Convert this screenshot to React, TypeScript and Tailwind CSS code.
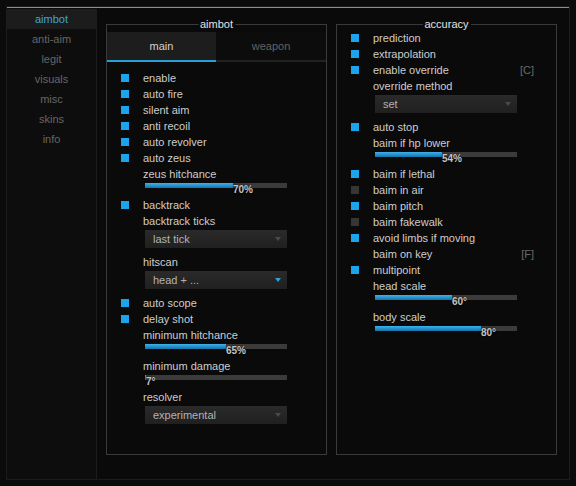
import React from "react";

type Item =
  | { kind: "check"; label: string; on?: boolean; bind?: string }
  | { kind: "label"; label: string }
  | { kind: "slider"; fill: number; text: string }
  | { kind: "select"; value: string; active?: boolean };

const tabs = ["aimbot", "anti-aim", "legit", "visuals", "misc", "skins", "info"];

const aimbotItems: Item[] = [
  { kind: "check", label: "enable", on: true },
  { kind: "check", label: "auto fire", on: true },
  { kind: "check", label: "silent aim", on: true },
  { kind: "check", label: "anti recoil", on: true },
  { kind: "check", label: "auto revolver", on: true },
  { kind: "check", label: "auto zeus", on: true },
  { kind: "label", label: "zeus hitchance" },
  { kind: "slider", fill: 88, text: "70%" },
  { kind: "check", label: "backtrack", on: true },
  { kind: "label", label: "backtrack ticks" },
  { kind: "select", value: "last tick" },
  { kind: "label", label: "hitscan" },
  { kind: "select", value: "head + ...", active: true },
  { kind: "check", label: "auto scope", on: true },
  { kind: "check", label: "delay shot", on: true },
  { kind: "label", label: "minimum hitchance" },
  { kind: "slider", fill: 81, text: "65%" },
  { kind: "label", label: "minimum damage" },
  { kind: "slider", fill: 1, text: "7°" },
  { kind: "label", label: "resolver" },
  { kind: "select", value: "experimental" },
];

const accuracyItems: Item[] = [
  { kind: "check", label: "prediction", on: true },
  { kind: "check", label: "extrapolation", on: true },
  { kind: "check", label: "enable override", on: true, bind: "[C]" },
  { kind: "label", label: "override method" },
  { kind: "select", value: "set" },
  { kind: "check", label: "auto stop", on: true },
  { kind: "label", label: "baim if hp lower" },
  { kind: "slider", fill: 67, text: "54%" },
  { kind: "check", label: "baim if lethal", on: true },
  { kind: "check", label: "baim in air" },
  { kind: "check", label: "baim pitch", on: true },
  { kind: "check", label: "baim fakewalk" },
  { kind: "check", label: "avoid limbs if moving", on: true },
  { kind: "label", label: "baim on key" },
  { kind: "check", label: "multipoint", on: true },
  { kind: "label", label: "head scale" },
  { kind: "slider", fill: 77, text: "60°" },
  { kind: "label", label: "body scale" },
  { kind: "slider", fill: 106, text: "80°" },
];

function Row({ item }: { item: Item }) {
  if (item.kind === "check" || item.kind === "label") {
    const bind =
      item.kind === "check" ? item.bind : item.label === "baim on key" ? "[F]" : undefined;
    return (
      <div className="flex h-[16px] items-center pr-[22px]">
        <div className="flex w-[22px] items-center">
          {item.kind === "check" && (
            <div className={`h-[8px] w-[8px] ${item.on ? "bg-[#1ba3ec]" : "bg-[#363636]"}`} />
          )}
        </div>
        <span className="text-[#cdcdcd]">{item.label}</span>
        {bind && <span className="ml-auto text-[#6a6a6a]">{bind}</span>}
      </div>
    );
  }
  if (item.kind === "slider") {
    return (
      <div className="h-[15px] pl-[24px] pt-[1px]">
        <div className="relative h-[5px] w-[142px] bg-[#3b3b3b]">
          <div
            className="h-full bg-gradient-to-b from-[#3cb2ee] to-[#1473a9]"
            style={{ width: item.fill }}
          />
          <span
            className="absolute top-[2px] text-[10px] font-bold leading-[10px] text-[#c4c4c4] [text-shadow:0_0_2px_#000]"
            style={{ left: item.fill }}
          >
            {item.text}
          </span>
        </div>
      </div>
    );
  }
  return (
    <div className="pb-[6px] pl-[24px] pt-[1px]">
      <div className="flex h-[18px] w-[142px] items-center bg-gradient-to-b from-[#2a2a2a] to-[#202020] pl-[8px] pr-[6px] text-[#b3b3b3]">
        <span>{item.value}</span>
        <svg className="ml-auto" width="6" height="4" viewBox="0 0 6 4">
          <path d="M0 0h6L3 4z" fill={item.active ? "#2f9fd8" : "#4a4a4a"} />
        </svg>
      </div>
    </div>
  );
}

function Group({ title, children }: { title: string; children: React.ReactNode }) {
  return (
    <div className="relative h-[431px] w-[221px] border border-[#3a3a3a]">
      <span className="absolute left-1/2 top-[-9px] -translate-x-1/2 bg-[#0a0a0a] px-[2px] leading-[16px] text-[#e2e2e2]">
        {title}
      </span>
      {children}
    </div>
  );
}

export default function App() {
  return (
    <div className="h-[486px] w-[576px] bg-[#0b0b0b] pl-[6px] pt-[6px] font-['Liberation_Sans',Arial,sans-serif] text-[11px]">
      <div className="flex h-[474px] w-[564px] flex-col border border-[#1c1c1c] bg-[#0a0a0a]">
        <div className="h-[1px] bg-[#3aa6dc]" />
        <div className="mt-[1px] flex flex-1">
          {/* sidebar */}
          <div className="w-[90px] border-r border-[#1c1c1c] bg-[#0d0d0d]">
            {tabs.map((t, i) => (
              <div
                key={t}
                className={`flex h-[20px] items-center justify-center ${
                  i === 0 ? "bg-[#1c1c1c] text-[#3ba4da]" : "text-[#666666]"
                }`}
              >
                {t}
              </div>
            ))}
          </div>

          {/* content */}
          <div className="flex flex-1 gap-[9px] pl-[9px] pt-[15px]">
            <Group title="aimbot">
              <div className="mt-[7px] flex h-[30px]">
                <div className="flex w-[109px] flex-col bg-[#1d1d1d]">
                  <div className="flex flex-1 items-center justify-center text-[#d2d2d2]">main</div>
                  <div className="h-[2px] bg-[#2a9fd6]" />
                </div>
                <div className="flex flex-1 flex-col bg-[#0c0c0c]">
                  <div className="flex flex-1 items-center justify-center text-[#626262]">weapon</div>
                  <div className="h-[2px] bg-[#222222]" />
                </div>
              </div>
              <div className="pl-[14px] pt-[8px]">
                {aimbotItems.map((it, i) => (
                  <Row key={i} item={it} />
                ))}
              </div>
            </Group>
            <Group title="accuracy">
              <div className="pl-[14px] pt-[5px]">
                {accuracyItems.map((it, i) => (
                  <Row key={i} item={it} />
                ))}
              </div>
            </Group>
          </div>
        </div>
      </div>
    </div>
  );
}
